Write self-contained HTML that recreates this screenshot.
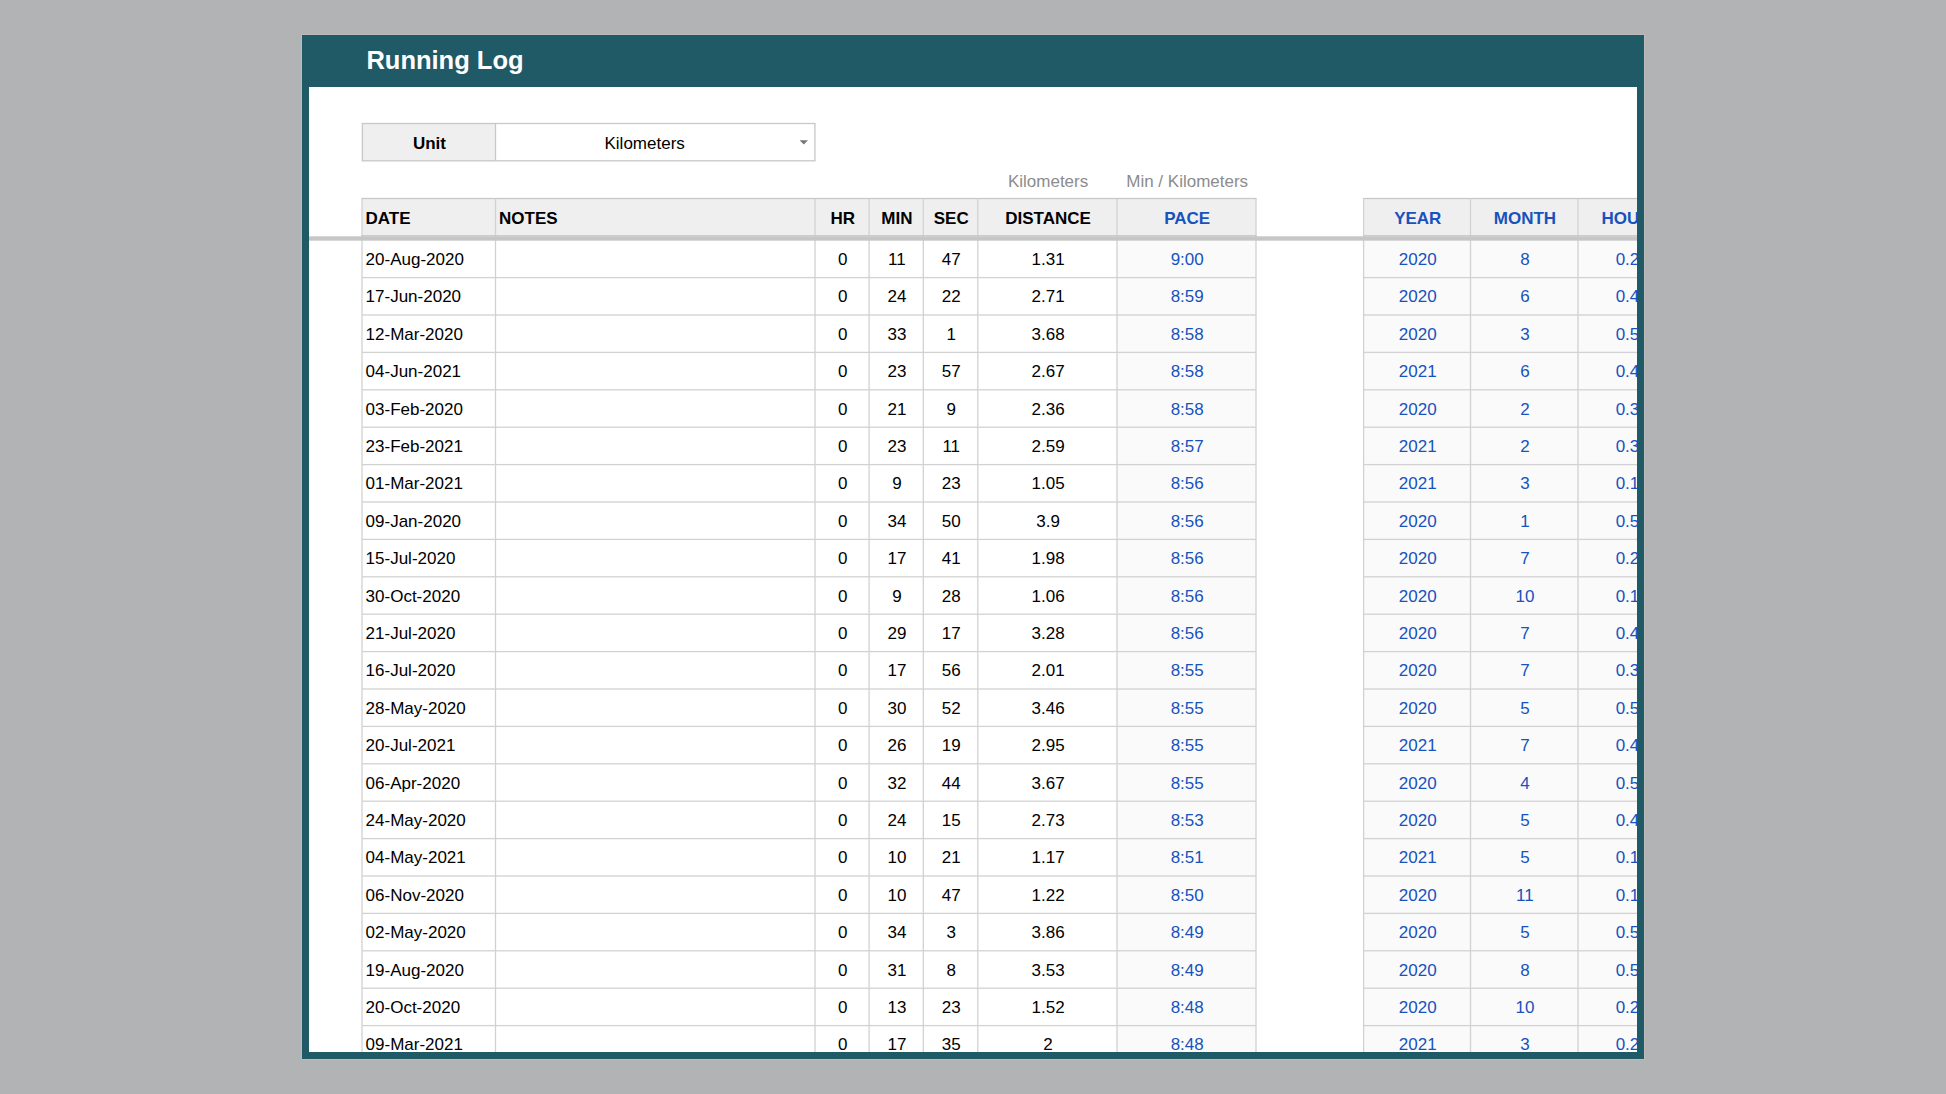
<!DOCTYPE html>
<html><head><meta charset="utf-8"><style>
html,body{margin:0;padding:0;}
body{width:1946px;height:1094px;background:#b2b3b5;position:relative;overflow:hidden;font-family:"Liberation Sans",sans-serif;}
#frame{position:absolute;left:302px;top:35px;width:1342px;height:1024px;background:#215a67;box-shadow:0 0 0 1px #bdbaba;}
#title{position:absolute;left:366.4px;top:48.3px;font-size:25.5px;line-height:25.5px;font-weight:bold;color:#fff;white-space:nowrap;}
#sheet{position:absolute;left:309px;top:87px;width:1328px;height:965px;background:#fff;overflow:hidden;}
#inner{position:absolute;left:-309px;top:-87px;width:1946px;height:1094px;}
svg{position:absolute;left:0;top:0;}
.t{position:absolute;font-size:17px;line-height:40px;height:40px;white-space:nowrap;color:#000;}
.b{font-weight:bold;}
.blue{color:#1752bd;}
.gray{color:#8c8c8c;}
</style></head><body>
<div id="frame"></div>
<div id="title">Running Log</div>
<div id="sheet"><div id="inner">
<svg width="1946" height="1094" viewBox="0 0 1946 1094"><rect x="362.00" y="123.50" width="133.50" height="37.30" fill="#efefef"/><rect x="362.00" y="198.50" width="894.00" height="37.80" fill="#efefef"/><rect x="1363.60" y="198.50" width="321.40" height="37.80" fill="#efefef"/><rect x="1117.00" y="240.70" width="139.00" height="819.30" fill="#fafafa"/><rect x="1363.60" y="240.70" width="321.40" height="819.30" fill="#fafafa"/><rect x="361.75" y="122.85" width="453.80" height="1.30" fill="#c8c8c8"/><rect x="361.75" y="160.15" width="453.80" height="1.30" fill="#c8c8c8"/><rect x="361.75" y="123.50" width="1.30" height="37.30" fill="#c8c8c8"/><rect x="494.85" y="123.50" width="1.30" height="37.30" fill="#c8c8c8"/><rect x="814.25" y="123.50" width="1.30" height="37.30" fill="#c8c8c8"/><rect x="361.35" y="197.85" width="895.30" height="1.30" fill="#c8c8c8"/><rect x="361.35" y="198.50" width="1.30" height="861.50" fill="#d2d2d2"/><rect x="494.85" y="198.50" width="1.30" height="861.50" fill="#d2d2d2"/><rect x="814.35" y="198.50" width="1.30" height="861.50" fill="#d2d2d2"/><rect x="868.45" y="198.50" width="1.30" height="861.50" fill="#d2d2d2"/><rect x="922.65" y="198.50" width="1.30" height="861.50" fill="#d2d2d2"/><rect x="977.15" y="198.50" width="1.30" height="861.50" fill="#d2d2d2"/><rect x="1116.35" y="198.50" width="1.30" height="861.50" fill="#d2d2d2"/><rect x="1255.35" y="198.50" width="1.30" height="861.50" fill="#d2d2d2"/><rect x="362.00" y="276.95" width="894.00" height="1.30" fill="#d2d2d2"/><rect x="362.00" y="314.35" width="894.00" height="1.30" fill="#d2d2d2"/><rect x="362.00" y="351.75" width="894.00" height="1.30" fill="#d2d2d2"/><rect x="362.00" y="389.15" width="894.00" height="1.30" fill="#d2d2d2"/><rect x="362.00" y="426.55" width="894.00" height="1.30" fill="#d2d2d2"/><rect x="362.00" y="463.95" width="894.00" height="1.30" fill="#d2d2d2"/><rect x="362.00" y="501.35" width="894.00" height="1.30" fill="#d2d2d2"/><rect x="362.00" y="538.75" width="894.00" height="1.30" fill="#d2d2d2"/><rect x="362.00" y="576.15" width="894.00" height="1.30" fill="#d2d2d2"/><rect x="362.00" y="613.55" width="894.00" height="1.30" fill="#d2d2d2"/><rect x="362.00" y="650.95" width="894.00" height="1.30" fill="#d2d2d2"/><rect x="362.00" y="688.35" width="894.00" height="1.30" fill="#d2d2d2"/><rect x="362.00" y="725.75" width="894.00" height="1.30" fill="#d2d2d2"/><rect x="362.00" y="763.15" width="894.00" height="1.30" fill="#d2d2d2"/><rect x="362.00" y="800.55" width="894.00" height="1.30" fill="#d2d2d2"/><rect x="362.00" y="837.95" width="894.00" height="1.30" fill="#d2d2d2"/><rect x="362.00" y="875.35" width="894.00" height="1.30" fill="#d2d2d2"/><rect x="362.00" y="912.75" width="894.00" height="1.30" fill="#d2d2d2"/><rect x="362.00" y="950.15" width="894.00" height="1.30" fill="#d2d2d2"/><rect x="362.00" y="987.55" width="894.00" height="1.30" fill="#d2d2d2"/><rect x="362.00" y="1024.95" width="894.00" height="1.30" fill="#d2d2d2"/><rect x="362.00" y="1062.35" width="894.00" height="1.30" fill="#d2d2d2"/><rect x="361.35" y="235.10" width="895.30" height="1.40" fill="#c8c8c8"/><rect x="1362.95" y="197.85" width="322.70" height="1.30" fill="#c8c8c8"/><rect x="1362.95" y="198.50" width="1.30" height="861.50" fill="#d2d2d2"/><rect x="1469.85" y="198.50" width="1.30" height="861.50" fill="#d2d2d2"/><rect x="1577.35" y="198.50" width="1.30" height="861.50" fill="#d2d2d2"/><rect x="1684.35" y="198.50" width="1.30" height="861.50" fill="#d2d2d2"/><rect x="1363.60" y="276.95" width="321.40" height="1.30" fill="#d2d2d2"/><rect x="1363.60" y="314.35" width="321.40" height="1.30" fill="#d2d2d2"/><rect x="1363.60" y="351.75" width="321.40" height="1.30" fill="#d2d2d2"/><rect x="1363.60" y="389.15" width="321.40" height="1.30" fill="#d2d2d2"/><rect x="1363.60" y="426.55" width="321.40" height="1.30" fill="#d2d2d2"/><rect x="1363.60" y="463.95" width="321.40" height="1.30" fill="#d2d2d2"/><rect x="1363.60" y="501.35" width="321.40" height="1.30" fill="#d2d2d2"/><rect x="1363.60" y="538.75" width="321.40" height="1.30" fill="#d2d2d2"/><rect x="1363.60" y="576.15" width="321.40" height="1.30" fill="#d2d2d2"/><rect x="1363.60" y="613.55" width="321.40" height="1.30" fill="#d2d2d2"/><rect x="1363.60" y="650.95" width="321.40" height="1.30" fill="#d2d2d2"/><rect x="1363.60" y="688.35" width="321.40" height="1.30" fill="#d2d2d2"/><rect x="1363.60" y="725.75" width="321.40" height="1.30" fill="#d2d2d2"/><rect x="1363.60" y="763.15" width="321.40" height="1.30" fill="#d2d2d2"/><rect x="1363.60" y="800.55" width="321.40" height="1.30" fill="#d2d2d2"/><rect x="1363.60" y="837.95" width="321.40" height="1.30" fill="#d2d2d2"/><rect x="1363.60" y="875.35" width="321.40" height="1.30" fill="#d2d2d2"/><rect x="1363.60" y="912.75" width="321.40" height="1.30" fill="#d2d2d2"/><rect x="1363.60" y="950.15" width="321.40" height="1.30" fill="#d2d2d2"/><rect x="1363.60" y="987.55" width="321.40" height="1.30" fill="#d2d2d2"/><rect x="1363.60" y="1024.95" width="321.40" height="1.30" fill="#d2d2d2"/><rect x="1363.60" y="1062.35" width="321.40" height="1.30" fill="#d2d2d2"/><rect x="1362.95" y="235.10" width="322.70" height="1.40" fill="#c8c8c8"/><rect x="309.00" y="236.30" width="1328.00" height="4.40" fill="#c6c6c6"/></svg><div class="t b" style="left:362.70px;top:124.10px;width:133.50px;text-align:center;">Unit</div>
<div class="t " style="left:604.50px;top:124.10px;width:200.00px;text-align:left;">Kilometers</div>
<svg width="1946" height="1094" style="position:absolute;left:0;top:0"><polygon points="799.6,140.2 808.0,140.2 803.8,144.6" fill="#777"/></svg>
<div class="t gray" style="left:978.50px;top:161.50px;width:139.20px;text-align:center;">Kilometers</div>
<div class="t gray" style="left:1117.70px;top:161.50px;width:139.00px;text-align:center;">Min / Kilometers</div>
<div class="t b " style="left:365.50px;top:198.70px;width:133.50px;text-align:left;">DATE</div>
<div class="t b " style="left:499.00px;top:198.70px;width:319.50px;text-align:left;">NOTES</div>
<div class="t b " style="left:815.70px;top:198.70px;width:54.10px;text-align:center;">HR</div>
<div class="t b " style="left:869.80px;top:198.70px;width:54.20px;text-align:center;">MIN</div>
<div class="t b " style="left:924.00px;top:198.70px;width:54.50px;text-align:center;">SEC</div>
<div class="t b " style="left:978.50px;top:198.70px;width:139.20px;text-align:center;">DISTANCE</div>
<div class="t b blue" style="left:1117.70px;top:198.70px;width:139.00px;text-align:center;">PACE</div>
<div class="t b blue" style="left:1364.30px;top:198.70px;width:106.90px;text-align:center;">YEAR</div>
<div class="t b blue" style="left:1471.20px;top:198.70px;width:107.50px;text-align:center;">MONTH</div>
<div class="t b blue" style="left:1578.70px;top:198.70px;width:107.00px;text-align:center;">HOURS</div>
<div class="t " style="left:365.60px;top:240.00px;width:130.00px;text-align:left;">20-Aug-2020</div>
<div class="t " style="left:815.70px;top:240.00px;width:54.10px;text-align:center;">0</div>
<div class="t " style="left:869.80px;top:240.00px;width:54.20px;text-align:center;">11</div>
<div class="t " style="left:924.00px;top:240.00px;width:54.50px;text-align:center;">47</div>
<div class="t " style="left:978.50px;top:240.00px;width:139.20px;text-align:center;">1.31</div>
<div class="t blue" style="left:1117.70px;top:240.00px;width:139.00px;text-align:center;">9:00</div>
<div class="t blue" style="left:1364.30px;top:240.00px;width:106.90px;text-align:center;">2020</div>
<div class="t blue" style="left:1471.20px;top:240.00px;width:107.50px;text-align:center;">8</div>
<div class="t blue" style="left:1578.70px;top:240.00px;width:107.00px;text-align:center;">0.20</div>
<div class="t " style="left:365.60px;top:277.40px;width:130.00px;text-align:left;">17-Jun-2020</div>
<div class="t " style="left:815.70px;top:277.40px;width:54.10px;text-align:center;">0</div>
<div class="t " style="left:869.80px;top:277.40px;width:54.20px;text-align:center;">24</div>
<div class="t " style="left:924.00px;top:277.40px;width:54.50px;text-align:center;">22</div>
<div class="t " style="left:978.50px;top:277.40px;width:139.20px;text-align:center;">2.71</div>
<div class="t blue" style="left:1117.70px;top:277.40px;width:139.00px;text-align:center;">8:59</div>
<div class="t blue" style="left:1364.30px;top:277.40px;width:106.90px;text-align:center;">2020</div>
<div class="t blue" style="left:1471.20px;top:277.40px;width:107.50px;text-align:center;">6</div>
<div class="t blue" style="left:1578.70px;top:277.40px;width:107.00px;text-align:center;">0.41</div>
<div class="t " style="left:365.60px;top:314.80px;width:130.00px;text-align:left;">12-Mar-2020</div>
<div class="t " style="left:815.70px;top:314.80px;width:54.10px;text-align:center;">0</div>
<div class="t " style="left:869.80px;top:314.80px;width:54.20px;text-align:center;">33</div>
<div class="t " style="left:924.00px;top:314.80px;width:54.50px;text-align:center;">1</div>
<div class="t " style="left:978.50px;top:314.80px;width:139.20px;text-align:center;">3.68</div>
<div class="t blue" style="left:1117.70px;top:314.80px;width:139.00px;text-align:center;">8:58</div>
<div class="t blue" style="left:1364.30px;top:314.80px;width:106.90px;text-align:center;">2020</div>
<div class="t blue" style="left:1471.20px;top:314.80px;width:107.50px;text-align:center;">3</div>
<div class="t blue" style="left:1578.70px;top:314.80px;width:107.00px;text-align:center;">0.55</div>
<div class="t " style="left:365.60px;top:352.20px;width:130.00px;text-align:left;">04-Jun-2021</div>
<div class="t " style="left:815.70px;top:352.20px;width:54.10px;text-align:center;">0</div>
<div class="t " style="left:869.80px;top:352.20px;width:54.20px;text-align:center;">23</div>
<div class="t " style="left:924.00px;top:352.20px;width:54.50px;text-align:center;">57</div>
<div class="t " style="left:978.50px;top:352.20px;width:139.20px;text-align:center;">2.67</div>
<div class="t blue" style="left:1117.70px;top:352.20px;width:139.00px;text-align:center;">8:58</div>
<div class="t blue" style="left:1364.30px;top:352.20px;width:106.90px;text-align:center;">2021</div>
<div class="t blue" style="left:1471.20px;top:352.20px;width:107.50px;text-align:center;">6</div>
<div class="t blue" style="left:1578.70px;top:352.20px;width:107.00px;text-align:center;">0.40</div>
<div class="t " style="left:365.60px;top:389.60px;width:130.00px;text-align:left;">03-Feb-2020</div>
<div class="t " style="left:815.70px;top:389.60px;width:54.10px;text-align:center;">0</div>
<div class="t " style="left:869.80px;top:389.60px;width:54.20px;text-align:center;">21</div>
<div class="t " style="left:924.00px;top:389.60px;width:54.50px;text-align:center;">9</div>
<div class="t " style="left:978.50px;top:389.60px;width:139.20px;text-align:center;">2.36</div>
<div class="t blue" style="left:1117.70px;top:389.60px;width:139.00px;text-align:center;">8:58</div>
<div class="t blue" style="left:1364.30px;top:389.60px;width:106.90px;text-align:center;">2020</div>
<div class="t blue" style="left:1471.20px;top:389.60px;width:107.50px;text-align:center;">2</div>
<div class="t blue" style="left:1578.70px;top:389.60px;width:107.00px;text-align:center;">0.35</div>
<div class="t " style="left:365.60px;top:427.00px;width:130.00px;text-align:left;">23-Feb-2021</div>
<div class="t " style="left:815.70px;top:427.00px;width:54.10px;text-align:center;">0</div>
<div class="t " style="left:869.80px;top:427.00px;width:54.20px;text-align:center;">23</div>
<div class="t " style="left:924.00px;top:427.00px;width:54.50px;text-align:center;">11</div>
<div class="t " style="left:978.50px;top:427.00px;width:139.20px;text-align:center;">2.59</div>
<div class="t blue" style="left:1117.70px;top:427.00px;width:139.00px;text-align:center;">8:57</div>
<div class="t blue" style="left:1364.30px;top:427.00px;width:106.90px;text-align:center;">2021</div>
<div class="t blue" style="left:1471.20px;top:427.00px;width:107.50px;text-align:center;">2</div>
<div class="t blue" style="left:1578.70px;top:427.00px;width:107.00px;text-align:center;">0.39</div>
<div class="t " style="left:365.60px;top:464.40px;width:130.00px;text-align:left;">01-Mar-2021</div>
<div class="t " style="left:815.70px;top:464.40px;width:54.10px;text-align:center;">0</div>
<div class="t " style="left:869.80px;top:464.40px;width:54.20px;text-align:center;">9</div>
<div class="t " style="left:924.00px;top:464.40px;width:54.50px;text-align:center;">23</div>
<div class="t " style="left:978.50px;top:464.40px;width:139.20px;text-align:center;">1.05</div>
<div class="t blue" style="left:1117.70px;top:464.40px;width:139.00px;text-align:center;">8:56</div>
<div class="t blue" style="left:1364.30px;top:464.40px;width:106.90px;text-align:center;">2021</div>
<div class="t blue" style="left:1471.20px;top:464.40px;width:107.50px;text-align:center;">3</div>
<div class="t blue" style="left:1578.70px;top:464.40px;width:107.00px;text-align:center;">0.16</div>
<div class="t " style="left:365.60px;top:501.80px;width:130.00px;text-align:left;">09-Jan-2020</div>
<div class="t " style="left:815.70px;top:501.80px;width:54.10px;text-align:center;">0</div>
<div class="t " style="left:869.80px;top:501.80px;width:54.20px;text-align:center;">34</div>
<div class="t " style="left:924.00px;top:501.80px;width:54.50px;text-align:center;">50</div>
<div class="t " style="left:978.50px;top:501.80px;width:139.20px;text-align:center;">3.9</div>
<div class="t blue" style="left:1117.70px;top:501.80px;width:139.00px;text-align:center;">8:56</div>
<div class="t blue" style="left:1364.30px;top:501.80px;width:106.90px;text-align:center;">2020</div>
<div class="t blue" style="left:1471.20px;top:501.80px;width:107.50px;text-align:center;">1</div>
<div class="t blue" style="left:1578.70px;top:501.80px;width:107.00px;text-align:center;">0.58</div>
<div class="t " style="left:365.60px;top:539.20px;width:130.00px;text-align:left;">15-Jul-2020</div>
<div class="t " style="left:815.70px;top:539.20px;width:54.10px;text-align:center;">0</div>
<div class="t " style="left:869.80px;top:539.20px;width:54.20px;text-align:center;">17</div>
<div class="t " style="left:924.00px;top:539.20px;width:54.50px;text-align:center;">41</div>
<div class="t " style="left:978.50px;top:539.20px;width:139.20px;text-align:center;">1.98</div>
<div class="t blue" style="left:1117.70px;top:539.20px;width:139.00px;text-align:center;">8:56</div>
<div class="t blue" style="left:1364.30px;top:539.20px;width:106.90px;text-align:center;">2020</div>
<div class="t blue" style="left:1471.20px;top:539.20px;width:107.50px;text-align:center;">7</div>
<div class="t blue" style="left:1578.70px;top:539.20px;width:107.00px;text-align:center;">0.29</div>
<div class="t " style="left:365.60px;top:576.60px;width:130.00px;text-align:left;">30-Oct-2020</div>
<div class="t " style="left:815.70px;top:576.60px;width:54.10px;text-align:center;">0</div>
<div class="t " style="left:869.80px;top:576.60px;width:54.20px;text-align:center;">9</div>
<div class="t " style="left:924.00px;top:576.60px;width:54.50px;text-align:center;">28</div>
<div class="t " style="left:978.50px;top:576.60px;width:139.20px;text-align:center;">1.06</div>
<div class="t blue" style="left:1117.70px;top:576.60px;width:139.00px;text-align:center;">8:56</div>
<div class="t blue" style="left:1364.30px;top:576.60px;width:106.90px;text-align:center;">2020</div>
<div class="t blue" style="left:1471.20px;top:576.60px;width:107.50px;text-align:center;">10</div>
<div class="t blue" style="left:1578.70px;top:576.60px;width:107.00px;text-align:center;">0.16</div>
<div class="t " style="left:365.60px;top:614.00px;width:130.00px;text-align:left;">21-Jul-2020</div>
<div class="t " style="left:815.70px;top:614.00px;width:54.10px;text-align:center;">0</div>
<div class="t " style="left:869.80px;top:614.00px;width:54.20px;text-align:center;">29</div>
<div class="t " style="left:924.00px;top:614.00px;width:54.50px;text-align:center;">17</div>
<div class="t " style="left:978.50px;top:614.00px;width:139.20px;text-align:center;">3.28</div>
<div class="t blue" style="left:1117.70px;top:614.00px;width:139.00px;text-align:center;">8:56</div>
<div class="t blue" style="left:1364.30px;top:614.00px;width:106.90px;text-align:center;">2020</div>
<div class="t blue" style="left:1471.20px;top:614.00px;width:107.50px;text-align:center;">7</div>
<div class="t blue" style="left:1578.70px;top:614.00px;width:107.00px;text-align:center;">0.49</div>
<div class="t " style="left:365.60px;top:651.40px;width:130.00px;text-align:left;">16-Jul-2020</div>
<div class="t " style="left:815.70px;top:651.40px;width:54.10px;text-align:center;">0</div>
<div class="t " style="left:869.80px;top:651.40px;width:54.20px;text-align:center;">17</div>
<div class="t " style="left:924.00px;top:651.40px;width:54.50px;text-align:center;">56</div>
<div class="t " style="left:978.50px;top:651.40px;width:139.20px;text-align:center;">2.01</div>
<div class="t blue" style="left:1117.70px;top:651.40px;width:139.00px;text-align:center;">8:55</div>
<div class="t blue" style="left:1364.30px;top:651.40px;width:106.90px;text-align:center;">2020</div>
<div class="t blue" style="left:1471.20px;top:651.40px;width:107.50px;text-align:center;">7</div>
<div class="t blue" style="left:1578.70px;top:651.40px;width:107.00px;text-align:center;">0.30</div>
<div class="t " style="left:365.60px;top:688.80px;width:130.00px;text-align:left;">28-May-2020</div>
<div class="t " style="left:815.70px;top:688.80px;width:54.10px;text-align:center;">0</div>
<div class="t " style="left:869.80px;top:688.80px;width:54.20px;text-align:center;">30</div>
<div class="t " style="left:924.00px;top:688.80px;width:54.50px;text-align:center;">52</div>
<div class="t " style="left:978.50px;top:688.80px;width:139.20px;text-align:center;">3.46</div>
<div class="t blue" style="left:1117.70px;top:688.80px;width:139.00px;text-align:center;">8:55</div>
<div class="t blue" style="left:1364.30px;top:688.80px;width:106.90px;text-align:center;">2020</div>
<div class="t blue" style="left:1471.20px;top:688.80px;width:107.50px;text-align:center;">5</div>
<div class="t blue" style="left:1578.70px;top:688.80px;width:107.00px;text-align:center;">0.51</div>
<div class="t " style="left:365.60px;top:726.20px;width:130.00px;text-align:left;">20-Jul-2021</div>
<div class="t " style="left:815.70px;top:726.20px;width:54.10px;text-align:center;">0</div>
<div class="t " style="left:869.80px;top:726.20px;width:54.20px;text-align:center;">26</div>
<div class="t " style="left:924.00px;top:726.20px;width:54.50px;text-align:center;">19</div>
<div class="t " style="left:978.50px;top:726.20px;width:139.20px;text-align:center;">2.95</div>
<div class="t blue" style="left:1117.70px;top:726.20px;width:139.00px;text-align:center;">8:55</div>
<div class="t blue" style="left:1364.30px;top:726.20px;width:106.90px;text-align:center;">2021</div>
<div class="t blue" style="left:1471.20px;top:726.20px;width:107.50px;text-align:center;">7</div>
<div class="t blue" style="left:1578.70px;top:726.20px;width:107.00px;text-align:center;">0.44</div>
<div class="t " style="left:365.60px;top:763.60px;width:130.00px;text-align:left;">06-Apr-2020</div>
<div class="t " style="left:815.70px;top:763.60px;width:54.10px;text-align:center;">0</div>
<div class="t " style="left:869.80px;top:763.60px;width:54.20px;text-align:center;">32</div>
<div class="t " style="left:924.00px;top:763.60px;width:54.50px;text-align:center;">44</div>
<div class="t " style="left:978.50px;top:763.60px;width:139.20px;text-align:center;">3.67</div>
<div class="t blue" style="left:1117.70px;top:763.60px;width:139.00px;text-align:center;">8:55</div>
<div class="t blue" style="left:1364.30px;top:763.60px;width:106.90px;text-align:center;">2020</div>
<div class="t blue" style="left:1471.20px;top:763.60px;width:107.50px;text-align:center;">4</div>
<div class="t blue" style="left:1578.70px;top:763.60px;width:107.00px;text-align:center;">0.55</div>
<div class="t " style="left:365.60px;top:801.00px;width:130.00px;text-align:left;">24-May-2020</div>
<div class="t " style="left:815.70px;top:801.00px;width:54.10px;text-align:center;">0</div>
<div class="t " style="left:869.80px;top:801.00px;width:54.20px;text-align:center;">24</div>
<div class="t " style="left:924.00px;top:801.00px;width:54.50px;text-align:center;">15</div>
<div class="t " style="left:978.50px;top:801.00px;width:139.20px;text-align:center;">2.73</div>
<div class="t blue" style="left:1117.70px;top:801.00px;width:139.00px;text-align:center;">8:53</div>
<div class="t blue" style="left:1364.30px;top:801.00px;width:106.90px;text-align:center;">2020</div>
<div class="t blue" style="left:1471.20px;top:801.00px;width:107.50px;text-align:center;">5</div>
<div class="t blue" style="left:1578.70px;top:801.00px;width:107.00px;text-align:center;">0.40</div>
<div class="t " style="left:365.60px;top:838.40px;width:130.00px;text-align:left;">04-May-2021</div>
<div class="t " style="left:815.70px;top:838.40px;width:54.10px;text-align:center;">0</div>
<div class="t " style="left:869.80px;top:838.40px;width:54.20px;text-align:center;">10</div>
<div class="t " style="left:924.00px;top:838.40px;width:54.50px;text-align:center;">21</div>
<div class="t " style="left:978.50px;top:838.40px;width:139.20px;text-align:center;">1.17</div>
<div class="t blue" style="left:1117.70px;top:838.40px;width:139.00px;text-align:center;">8:51</div>
<div class="t blue" style="left:1364.30px;top:838.40px;width:106.90px;text-align:center;">2021</div>
<div class="t blue" style="left:1471.20px;top:838.40px;width:107.50px;text-align:center;">5</div>
<div class="t blue" style="left:1578.70px;top:838.40px;width:107.00px;text-align:center;">0.17</div>
<div class="t " style="left:365.60px;top:875.80px;width:130.00px;text-align:left;">06-Nov-2020</div>
<div class="t " style="left:815.70px;top:875.80px;width:54.10px;text-align:center;">0</div>
<div class="t " style="left:869.80px;top:875.80px;width:54.20px;text-align:center;">10</div>
<div class="t " style="left:924.00px;top:875.80px;width:54.50px;text-align:center;">47</div>
<div class="t " style="left:978.50px;top:875.80px;width:139.20px;text-align:center;">1.22</div>
<div class="t blue" style="left:1117.70px;top:875.80px;width:139.00px;text-align:center;">8:50</div>
<div class="t blue" style="left:1364.30px;top:875.80px;width:106.90px;text-align:center;">2020</div>
<div class="t blue" style="left:1471.20px;top:875.80px;width:107.50px;text-align:center;">11</div>
<div class="t blue" style="left:1578.70px;top:875.80px;width:107.00px;text-align:center;">0.18</div>
<div class="t " style="left:365.60px;top:913.20px;width:130.00px;text-align:left;">02-May-2020</div>
<div class="t " style="left:815.70px;top:913.20px;width:54.10px;text-align:center;">0</div>
<div class="t " style="left:869.80px;top:913.20px;width:54.20px;text-align:center;">34</div>
<div class="t " style="left:924.00px;top:913.20px;width:54.50px;text-align:center;">3</div>
<div class="t " style="left:978.50px;top:913.20px;width:139.20px;text-align:center;">3.86</div>
<div class="t blue" style="left:1117.70px;top:913.20px;width:139.00px;text-align:center;">8:49</div>
<div class="t blue" style="left:1364.30px;top:913.20px;width:106.90px;text-align:center;">2020</div>
<div class="t blue" style="left:1471.20px;top:913.20px;width:107.50px;text-align:center;">5</div>
<div class="t blue" style="left:1578.70px;top:913.20px;width:107.00px;text-align:center;">0.57</div>
<div class="t " style="left:365.60px;top:950.60px;width:130.00px;text-align:left;">19-Aug-2020</div>
<div class="t " style="left:815.70px;top:950.60px;width:54.10px;text-align:center;">0</div>
<div class="t " style="left:869.80px;top:950.60px;width:54.20px;text-align:center;">31</div>
<div class="t " style="left:924.00px;top:950.60px;width:54.50px;text-align:center;">8</div>
<div class="t " style="left:978.50px;top:950.60px;width:139.20px;text-align:center;">3.53</div>
<div class="t blue" style="left:1117.70px;top:950.60px;width:139.00px;text-align:center;">8:49</div>
<div class="t blue" style="left:1364.30px;top:950.60px;width:106.90px;text-align:center;">2020</div>
<div class="t blue" style="left:1471.20px;top:950.60px;width:107.50px;text-align:center;">8</div>
<div class="t blue" style="left:1578.70px;top:950.60px;width:107.00px;text-align:center;">0.52</div>
<div class="t " style="left:365.60px;top:988.00px;width:130.00px;text-align:left;">20-Oct-2020</div>
<div class="t " style="left:815.70px;top:988.00px;width:54.10px;text-align:center;">0</div>
<div class="t " style="left:869.80px;top:988.00px;width:54.20px;text-align:center;">13</div>
<div class="t " style="left:924.00px;top:988.00px;width:54.50px;text-align:center;">23</div>
<div class="t " style="left:978.50px;top:988.00px;width:139.20px;text-align:center;">1.52</div>
<div class="t blue" style="left:1117.70px;top:988.00px;width:139.00px;text-align:center;">8:48</div>
<div class="t blue" style="left:1364.30px;top:988.00px;width:106.90px;text-align:center;">2020</div>
<div class="t blue" style="left:1471.20px;top:988.00px;width:107.50px;text-align:center;">10</div>
<div class="t blue" style="left:1578.70px;top:988.00px;width:107.00px;text-align:center;">0.22</div>
<div class="t " style="left:365.60px;top:1025.40px;width:130.00px;text-align:left;">09-Mar-2021</div>
<div class="t " style="left:815.70px;top:1025.40px;width:54.10px;text-align:center;">0</div>
<div class="t " style="left:869.80px;top:1025.40px;width:54.20px;text-align:center;">17</div>
<div class="t " style="left:924.00px;top:1025.40px;width:54.50px;text-align:center;">35</div>
<div class="t " style="left:978.50px;top:1025.40px;width:139.20px;text-align:center;">2</div>
<div class="t blue" style="left:1117.70px;top:1025.40px;width:139.00px;text-align:center;">8:48</div>
<div class="t blue" style="left:1364.30px;top:1025.40px;width:106.90px;text-align:center;">2021</div>
<div class="t blue" style="left:1471.20px;top:1025.40px;width:107.50px;text-align:center;">3</div>
<div class="t blue" style="left:1578.70px;top:1025.40px;width:107.00px;text-align:center;">0.29</div></div></div>
</body></html>
